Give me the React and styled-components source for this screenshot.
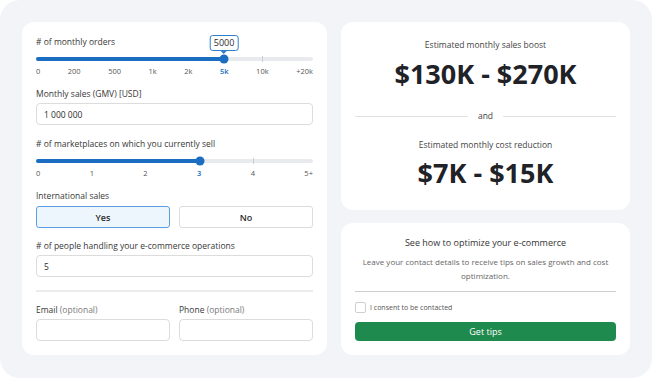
import React from 'react';
import styled, { createGlobalStyle } from 'styled-components';

const GlobalStyle = createGlobalStyle`
  html, body {
    margin: 0;
    padding: 0;
    background: #ffffff;
  }
  body {
    font-family: "Open Sans", "Noto Sans", "Liberation Sans", sans-serif;
    color: #2c2c2c;
  }
  * { box-sizing: border-box; }
`;

const Page = styled.div`
  width: 652px;
  height: 378px;
  border-radius: 20px;
  background: #f2f4f7;
  padding: 22px 22px 23px;
  display: flex;
  gap: 14px;
`;

const Card = styled.div`
  background: #ffffff;
  border-radius: 12px;
`;

const FormCard = styled(Card)`
  width: 305px;
  padding: 14px 14px 14px;
  display: flex;
  flex-direction: column;
`;

const RightColumn = styled.div`
  flex: 1;
  display: flex;
  flex-direction: column;
  gap: 13px;
`;

const ResultCard = styled(Card)`
  height: 188px;
  padding: 17px 14px 0;
  display: flex;
  flex-direction: column;
  align-items: center;
`;

const TipsCard = styled(Card)`
  flex: 1;
  padding: 13px 14px 14px;
  display: flex;
  flex-direction: column;
  align-items: center;
`;

const Label = styled.div`
  font-size: 8.5px;
  line-height: 12px;
  color: #383838;
  margin-top: ${p => p.$mt || 0}px;
`;

const Optional = styled.span`
  color: #7a7a7a;
`;

const TrackWrap = styled.div`
  position: relative;
  height: 12px;
  margin-top: 5px;
`;

const Track = styled.div`
  position: absolute;
  left: 0;
  right: 0;
  top: 4px;
  height: 4px;
  border-radius: 2px;
  background: #e8eaed;
`;

const Fill = styled.div`
  position: absolute;
  left: 0;
  top: 4px;
  height: 4px;
  border-radius: 2px;
  background: #1a6dc1;
`;

const Tick = styled.div`
  position: absolute;
  top: 3px;
  width: 1px;
  height: 6px;
  background: #c9ccd0;
`;

const Thumb = styled.div`
  position: absolute;
  top: 6px;
  width: 9px;
  height: 9px;
  border-radius: 50%;
  background: #1a6dc1;
  transform: translate(-50%, -50%);
`;

const Bubble = styled.div`
  position: absolute;
  bottom: 14px;
  transform: translateX(-50%);
  background: #ffffff;
  border: 1px solid #2f7fcf;
  border-radius: 3px;
  padding: 1px 3px;
  font-size: 9px;
  line-height: 12px;
  color: #2c2c2c;

  &::after {
    content: '';
    position: absolute;
    left: 50%;
    bottom: -4px;
    transform: translateX(-50%);
    border-left: 3px solid transparent;
    border-right: 3px solid transparent;
    border-top: 3px solid #2f7fcf;
  }
`;

const Marks = styled.div`
  display: flex;
  justify-content: space-between;
  font-size: 7.5px;
  line-height: 12px;
  color: #555;
`;

const Mark = styled.span`
  color: ${p => (p.$active ? '#1a6dc1' : '#555')};
  font-weight: ${p => (p.$active ? 600 : 400)};
`;

const Input = styled.div`
  height: 22px;
  border: 1px solid #dcdcdc;
  border-radius: 4px;
  padding: 0 7px;
  display: flex;
  align-items: center;
  font-size: 8.5px;
  color: #2c2c2c;
  margin-top: 3px;
`;

const Row = styled.div`
  display: flex;
  gap: 9px;
  margin-top: ${p => p.$mt || 0}px;
`;

const Col = styled.div`
  flex: 1;
  display: flex;
  flex-direction: column;
`;

const Choice = styled.div`
  flex: 1;
  height: 22px;
  border-radius: 3px;
  border: 1px solid ${p => (p.$selected ? '#5b9fe0' : '#dcdcdc')};
  background: ${p => (p.$selected ? '#eef6fd' : '#ffffff')};
  display: flex;
  align-items: center;
  justify-content: center;
  font-size: 9px;
  font-weight: 600;
  color: #2c2c2c;
`;

const Divider = styled.div`
  height: 2px;
  background: #ececec;
  margin-top: ${p => p.$mt || 0}px;
`;

const Caption = styled.div`
  font-size: 8.5px;
  line-height: 12px;
  color: #444;
`;

const BigNumber = styled.div`
  font-size: 27px;
  line-height: 32px;
  font-weight: 700;
  color: #1f2227;
  margin-top: ${p => p.$mt || 0}px;
`;

const AndRow = styled.div`
  align-self: stretch;
  display: flex;
  align-items: center;
  gap: 10px;
  margin: 20px 0 17px;
  font-size: 8.5px;
  line-height: 12px;
  color: #444;

  &::before, &::after {
    content: '';
    flex: 1;
    height: 1px;
    background: #e2e2e2;
  }
`;

const TipsTitle = styled.div`
  font-size: 9px;
  line-height: 14px;
  font-weight: 500;
  color: #333;
`;

const TipsText = styled.div`
  margin-top: 5px;
  font-size: 8px;
  line-height: 14px;
  color: #666;
  text-align: center;
  white-space: nowrap;
`;

const TipsDivider = styled.div`
  align-self: stretch;
  height: 1px;
  background: #cfcfcf;
  margin-top: 8px;
`;

const Consent = styled.label`
  align-self: stretch;
  display: flex;
  align-items: center;
  gap: 4px;
  margin-top: 10px;
  font-size: 7px;
  color: #555;
`;

const Box = styled.span`
  width: 11px;
  height: 11px;
  border: 1px solid #cfcfcf;
  border-radius: 2px;
  background: #fff;
`;

const GreenButton = styled.div`
  align-self: stretch;
  height: 19px;
  margin-top: 9px;
  border-radius: 4px;
  background: #1f8a4d;
  color: #ffffff;
  font-size: 9px;
  font-weight: 500;
  display: flex;
  align-items: center;
  justify-content: center;
`;

const Slider = ({ marks, positions, value, bubble }) => (
  <>
    <TrackWrap>
      <Track />
      {positions.map((p, i) =>
        i > value && i < positions.length - 1 ? (
          <Tick key={i} style={{ left: `${p}%` }} />
        ) : null
      )}
      <Fill style={{ width: `${positions[value]}%` }} />
      {bubble && <Bubble style={{ left: `${positions[value]}%` }}>{bubble}</Bubble>}
      <Thumb style={{ left: `${positions[value]}%` }} />
    </TrackWrap>
    <Marks>
      {marks.map((m, i) => (
        <Mark key={m} $active={i === value}>{m}</Mark>
      ))}
    </Marks>
  </>
);

export default function App() {
  return (
    <>
      <GlobalStyle />
      <Page>
        <FormCard>
          <Label># of monthly orders</Label>
          <Slider
            marks={['0', '200', '500', '1k', '2k', '5k', '10k', '+20k']}
            positions={[0, 13.9, 28.4, 42.4, 55, 67.9, 81.6, 100]}
            value={5}
            bubble="5000"
          />

          <Label $mt={11}>Monthly sales (GMV) [USD]</Label>
          <Input>1 000 000</Input>

          <Label $mt={13}># of marketplaces on which you currently sell</Label>
          <Slider
            marks={['0', '1', '2', '3', '4', '5+']}
            positions={[0.7, 20.2, 39.7, 59.2, 78.3, 100]}
            value={3}
          />

          <Label $mt={11}>International sales</Label>
          <Row $mt={4}>
            <Choice $selected>Yes</Choice>
            <Choice>No</Choice>
          </Row>

          <Label $mt={12}># of people handling your e-commerce operations</Label>
          <Input>5</Input>

          <Divider $mt={13} />

          <Row $mt={12}>
            <Col>
              <Label>Email <Optional>(optional)</Optional></Label>
              <Input />
            </Col>
            <Col>
              <Label>Phone <Optional>(optional)</Optional></Label>
              <Input />
            </Col>
          </Row>
        </FormCard>

        <RightColumn>
          <ResultCard>
            <Caption>Estimated monthly sales boost</Caption>
            <BigNumber $mt={7}>$130K - $270K</BigNumber>
            <AndRow>and</AndRow>
            <Caption>Estimated monthly cost reduction</Caption>
            <BigNumber $mt={6}>$7K - $15K</BigNumber>
          </ResultCard>

          <TipsCard>
            <TipsTitle>See how to optimize your e-commerce</TipsTitle>
            <TipsText>
              Leave your contact details to receive tips on sales growth and cost
              <br />
              optimization.
            </TipsText>
            <TipsDivider />
            <Consent>
              <Box />
              I consent to be contacted
            </Consent>
            <GreenButton>Get tips</GreenButton>
          </TipsCard>
        </RightColumn>
      </Page>
    </>
  );
}
